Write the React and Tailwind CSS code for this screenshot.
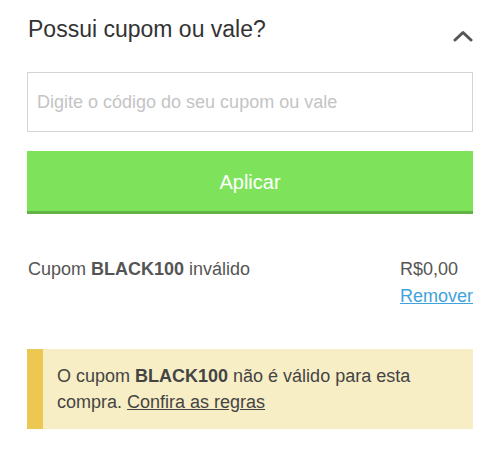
export default function App() {
  return (
    <div className="w-[500px] h-[469px] bg-white px-[27px] font-['Liberation_Sans',Arial,sans-serif]">
      {/* header */}
      <div className="flex items-start justify-between pt-[16px]">
        <h2 className="text-[23px] leading-[26px] text-[#333] pl-[1px]">Possui cupom ou vale?</h2>
        <svg className="mt-[14px]" width="20" height="12" viewBox="0 0 20 12" fill="none">
          <path d="M2 10 L10 2.5 L18 10" stroke="#555" strokeWidth="3" strokeLinecap="round" strokeLinejoin="round" />
        </svg>
      </div>

      <input
        className="mt-[30px] w-full h-[60px] border border-[#d4d4d4] px-[9px] text-[18px] text-[#333] placeholder:text-[#c4c4c4] outline-none"
        placeholder="Digite o código do seu cupom ou vale"
      />

      <button className="mt-[19px] w-full h-[63px] bg-[#7ee35a] border-b-[3px] border-[#5fb443] text-white text-[20px] pt-[2px]">
        Aplicar
      </button>

      {/* coupon status */}
      <div className="mt-[42px] flex justify-between text-[18px] leading-[27px] text-[#555]">
        <div className="pl-[1px]">
          Cupom <b className="font-bold">BLACK100</b> inválido
        </div>
        <div className="flex flex-col">
          <span>R$0,00</span>
          <a href="#" className="text-[#3fa3dc] underline">Remover</a>
        </div>
      </div>

      {/* alert */}
      <div className="mt-[39px] bg-[#f8eec5] border-l-[16px] border-[#ecc752] px-[14px] py-[14px] text-[18px] leading-[26px] text-[#444]">
        O cupom <b className="font-bold">BLACK100</b> não é válido para esta compra.{" "}
        <a href="#" className="underline">Confira as regras</a>
      </div>
    </div>
  );
}
